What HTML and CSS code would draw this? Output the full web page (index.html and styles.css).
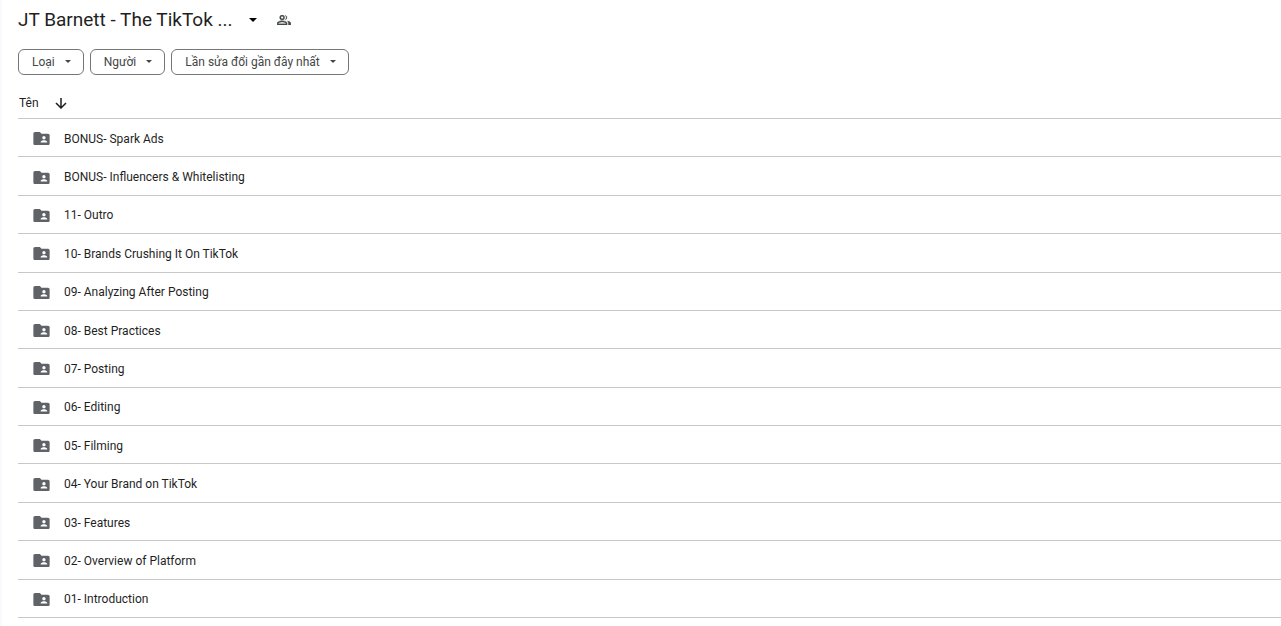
FILE: index.html
```html
<!DOCTYPE html>
<html lang="vi">
<head>
    <meta charset="UTF-8">
    <meta name="viewport" content="width=device-width, initial-scale=1.0">
    <title>JT Barnett - The TikTok ...</title>
    <link rel="stylesheet" href="styles.css">
</head>
<body>
    <svg class="sprite" aria-hidden="true">
        <symbol id="caret" viewBox="0 0 10 5"><path d="M0 0h10L5 5z"/></symbol>
        <symbol id="folder" viewBox="2 4 20 16">
            <path fill-rule="evenodd" d="M20 6h-8l-2-2H4c-1.100 0-2 .9-2 2v12c0 1.100.9 2 2 2h16c1.100 0 2-.9 2-2V8c0-1.100-.9-2-2-2zm-5 3c1.100 0 2 .9 2 2s-.9 2-2 2-2-.9-2-2 .9-2 2-2zm4 8h-8v-1c0-1.330 2.670-2 4-2s4 .67 4 2v1z"/>
        </symbol>
    </svg>

    <main class="drive">
        <header class="title-bar">
            <h1><button class="title" type="button">JT Barnett - The TikTok ... <svg class="title-caret"><use href="#caret"/></svg></button></h1>
            <button class="icon-button" type="button" aria-label="Quản lý quyền truy cập">
                <svg class="people" viewBox="1 4 22 16">
                    <path fill-rule="evenodd" d="M9 12a4 4 0 1 0 0-8 4 4 0 0 0 0 8zm0-2a2 2 0 1 1 0-4 2 2 0 0 1 0 4zM1 17.200C1 14.500 5.500 13 9 13s8 1.500 8 4.200V20H1zm2 .8h12v-.8c0-1-3.300-2.200-6-2.200s-6 1.200-6 2.200z"/>
                    <path d="M14 4.200a4 4 0 0 1 0 7.600 6 6 0 0 0 0-7.600zM17.500 13.500c3 .5 5.500 1.800 5.500 3.700V20h-4v-2.800c0-1.500-.6-2.700-1.500-3.700z"/>
                </svg>
            </button>
        </header>

        <div class="filters">
            <button class="chip" type="button">Loại <svg class="caret"><use href="#caret"/></svg></button>
            <button class="chip" type="button">Người <svg class="caret"><use href="#caret"/></svg></button>
            <button class="chip" type="button">Lần sửa đổi gần đây nhất <svg class="caret"><use href="#caret"/></svg></button>
        </div>

        <div class="list-header">
            <span>Tên</span>
            <button class="icon-button" type="button" aria-label="Đảo ngược thứ tự sắp xếp">
                <svg class="arrow" viewBox="0 0 12 12"><path d="M6 1v10M1 6l5 5 5-5"/></svg>
            </button>
        </div>

        <ul class="files">
            <li><svg class="folder"><use href="#folder"/></svg><a href="#">BONUS- Spark Ads</a></li>
            <li><svg class="folder"><use href="#folder"/></svg><a href="#">BONUS- Influencers &amp; Whitelisting</a></li>
            <li><svg class="folder"><use href="#folder"/></svg><a href="#">11- Outro</a></li>
            <li><svg class="folder"><use href="#folder"/></svg><a href="#">10- Brands Crushing It On TikTok</a></li>
            <li><svg class="folder"><use href="#folder"/></svg><a href="#">09- Analyzing After Posting</a></li>
            <li><svg class="folder"><use href="#folder"/></svg><a href="#">08- Best Practices</a></li>
            <li><svg class="folder"><use href="#folder"/></svg><a href="#">07- Posting</a></li>
            <li><svg class="folder"><use href="#folder"/></svg><a href="#">06- Editing</a></li>
            <li><svg class="folder"><use href="#folder"/></svg><a href="#">05- Filming</a></li>
            <li><svg class="folder"><use href="#folder"/></svg><a href="#">04- Your Brand on TikTok</a></li>
            <li><svg class="folder"><use href="#folder"/></svg><a href="#">03- Features</a></li>
            <li><svg class="folder"><use href="#folder"/></svg><a href="#">02- Overview of Platform</a></li>
            <li><svg class="folder"><use href="#folder"/></svg><a href="#">01- Introduction</a></li>
        </ul>
    </main>
</body>
</html>
```
FILE: styles.css
```css
* {
    box-sizing: border-box;
}

body {
    margin: 0;
    background-color: #f8fafd;
    color: #1f1f1f;
    font-family: Roboto, "Noto Sans", sans-serif;
    font-size: 12px;
}

button {
    padding: 0;
    border: none;
    background: none;
    color: inherit;
    font: inherit;
    cursor: pointer;
}

.sprite {
    display: none;
}

.drive {
    display: flex;
    flex-direction: column;
    min-height: 100vh;
    margin-left: 2px;
    padding: 6px 0 8px 16px;
    background-color: white;
}

.title-bar {
    display: flex;
    align-items: center;
    gap: 20px;
}

.title-bar h1 {
    margin: 0;
    font-size: 19px;
    font-weight: 400;
    line-height: 28px;
}

.title {
    display: flex;
    align-items: center;
    gap: 16px;
}

.title-caret {
    width: 8px;
    height: 4px;
}

.icon-button {
    display: flex;
}

.people {
    width: 14px;
    height: 10px;
    fill: #444746;
    stroke: #444746;
    stroke-width: 0.5;
}

.filters {
    display: flex;
    gap: 6px;
    margin-top: 15px;
}

.chip {
    display: flex;
    align-items: center;
    gap: 10px;
    height: 26px;
    padding: 0 12px 1px 13px;
    border: 1px solid #747775;
    border-radius: 6px;
    color: #444746;
}

.caret {
    width: 6px;
    height: 3px;
    fill: #444746;
}

.list-header {
    display: flex;
    align-items: center;
    gap: 16px;
    height: 44px;
    padding: 12px 0 0 1px;
    border-bottom: 1px solid #c7c7c7;
}

.arrow {
    width: 12px;
    height: 12px;
    fill: none;
    stroke: #1f1f1f;
    stroke-width: 1.5;
}

.files {
    display: grid;
    flex: 1;
    grid-auto-rows: 1fr;
    margin: 0;
    padding: 0;
    list-style: none;
}

.files li {
    display: flex;
    align-items: center;
    gap: 14px;
    padding: 2px 15px 0;
    border-bottom: 1px solid #c7c7c7;
}

.folder {
    width: 17px;
    height: 13px;
    fill: #5f6368;
}

.files a {
    color: #1f1f1f;
    text-decoration: none;
}

.files a:hover {
    text-decoration: underline;
}
```
